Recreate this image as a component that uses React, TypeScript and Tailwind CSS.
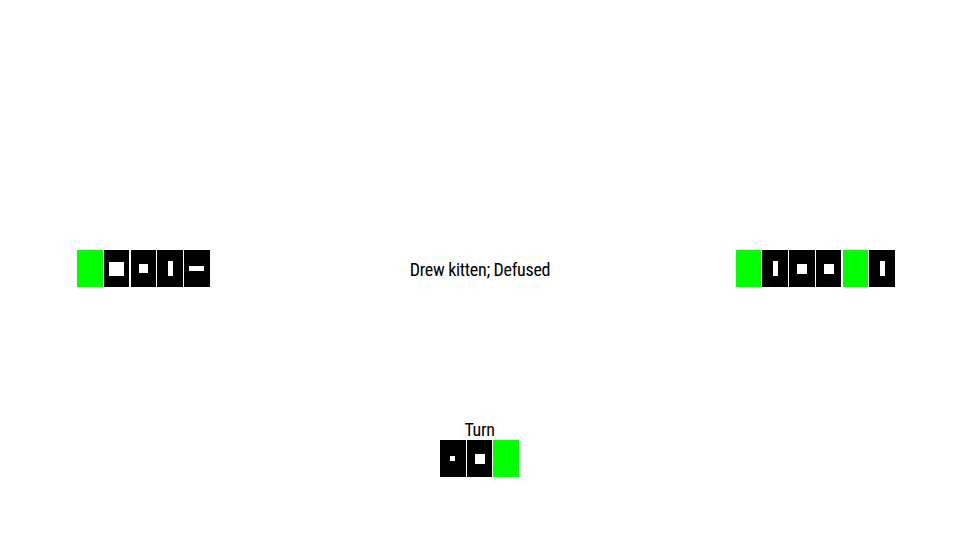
import React from "react";

type Sym = "none" | "bigsq" | "sq" | "midsq" | "tiny" | "vbar" | "hbar";
type C = { green?: boolean; sym?: Sym };

function Symbol({ s }: { s: Sym }) {
  if (s === "bigsq") return <div className="w-[15px] h-[14px] bg-white" />;
  if (s === "sq") return <div className="w-[9px] h-[9px] bg-white" />;
  if (s === "midsq") return <div className="w-[10px] h-[10px] bg-white" />;
  if (s === "tiny") return <div className="w-[5px] h-[5px] bg-white" />;
  if (s === "vbar") return <div className="w-[5px] h-[15px] bg-white" />;
  if (s === "hbar") return <div className="w-[15px] h-[5px] bg-white" />;
  return null;
}

function Card({ green, sym = "none" }: C) {
  return (
    <div
      className={
        "w-[25.6px] h-[37px] flex items-center justify-center " +
        (green ? "bg-[#00ff00]" : "bg-black")
      }
    >
      <Symbol s={sym} />
    </div>
  );
}

function Group({ cards }: { cards: C[] }) {
  return (
    <div className="flex gap-[1.2px]">
      {cards.map((c, i) => (
        <Card key={i} {...c} />
      ))}
    </div>
  );
}

const font = {
  fontFamily:
    '"Roboto Condensed", "Liberation Sans Narrow", "DejaVu Sans Condensed", "Liberation Sans", sans-serif',
};

export default function App() {
  return (
    <div className="w-[960px] h-[540px] bg-white flex flex-col" style={font}>
      <div className="pt-[250px] grid grid-cols-[1fr_auto_1fr] items-center h-[287px]">
        <div className="ml-[77px] justify-self-start">
          <Group
            cards={[
              { green: true },
              { sym: "bigsq" },
              { sym: "sq" },
              { sym: "vbar" },
              { sym: "hbar" },
            ]}
          />
        </div>
        <div className="text-[18px] leading-[18px] tracking-[-0.3px] text-black pt-[2px]">
          Drew kitten; Defused
        </div>
        <div className="mr-[65px] justify-self-end">
          <Group
            cards={[
              { green: true },
              { sym: "vbar" },
              { sym: "midsq" },
              { sym: "midsq" },
              { green: true },
              { sym: "vbar" },
            ]}
          />
        </div>
      </div>
      <div className="mt-[133px] flex flex-col items-center pr-[1px]">
        <div className="text-[18px] leading-[20px] tracking-[-0.3px] text-black">Turn</div>
        <Group cards={[{ sym: "tiny" }, { sym: "midsq" }, { green: true }]} />
      </div>
    </div>
  );
}
